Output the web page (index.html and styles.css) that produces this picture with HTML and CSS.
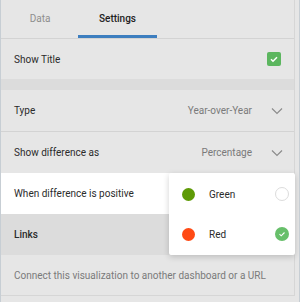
FILE: index.html
```html
<!DOCTYPE html>
<html lang="en">
<head>
  <meta charset="UTF-8"/>
  <title>Settings</title>
  <link rel="stylesheet" href="styles.css">
</head>
<body>
<div class="panel">
  <!-- Tabs -->
  <div class="tabs">
    <button class="tab">Data</button>
    <button class="tab active">Settings</button>
  </div>

  <!-- Title -->
  <div class="row">
    <span class="label">Show Title</span>
    <span class="checkbox">
      <svg width="10" height="10" viewBox="0 0 10 10"><path d="M2 5.2l2 2 4-4" fill="none" stroke="#fff" stroke-width="1.5"/></svg>
    </span>
  </div>

  <div class="spacer"></div>

  <!-- Options -->
  <div class="row bordered">
    <span class="label">Type</span>
    <span class="value">Year-over-Year</span>
    <svg class="chev" width="12" height="8" viewBox="0 0 12 8"><path d="M1 1.5l5 5 5-5" fill="none" stroke="#8c8c8c" stroke-width="1.2"/></svg>
  </div>
  <div class="row">
    <span class="label">Show difference as</span>
    <span class="value">Percentage</span>
    <svg class="chev" width="12" height="8" viewBox="0 0 12 8"><path d="M1 1.5l5 5 5-5" fill="none" stroke="#8c8c8c" stroke-width="1.2"/></svg>
  </div>
  <div class="row focus">
    <span class="label">When difference is positive</span>
  </div>

  <div class="row head">
    <span class="label">Links</span>
  </div>
  <div class="row note">
    <span>Connect this visualization to another dashboard or a URL</span>
  </div>

  <!-- Color menu -->
  <div class="menu">
    <div class="opt">
      <span class="dot green"></span>
      <span class="opt-name">Green</span>
      <span class="radio"></span>
    </div>
    <div class="opt">
      <span class="dot red"></span>
      <span class="opt-name">Red</span>
      <span class="radio on">
        <svg width="8" height="8" viewBox="0 0 8 8"><path d="M1.5 4.2l1.7 1.6 3.3-3.3" fill="none" stroke="#fff" stroke-width="1.1"/></svg>
      </span>
    </div>
  </div>
</div>
</body>
</html>
```

FILE: styles.css
```css
:root{
  --bg:#e6e6e6;
  --dim:#dcdcdc;
  --text:#2b2b2b;
  --muted:#7a7a7a;
  --line:#d3d3d3;
  --blue:#3d7ebf;
  --green:#5cb65f;
}
*{margin:0;padding:0;box-sizing:border-box;font-family:Roboto,Arial,sans-serif}
body{background:var(--bg);width:300px;height:302px;overflow:hidden;border-left:1px solid #c7ced4;border-right:1px solid #c7ced4}
.panel{position:relative;width:294px;height:296px;border-right:1px solid #d6d6d6;border-bottom:1px solid #d6d6d6}

.tabs{display:flex;height:39px;border-bottom:1px solid var(--line);padding-left:1px}
.tab{border:none;background:none;font-size:10px;color:#8e8e8e;width:76px;height:38px;padding-top:1px;border-bottom:3px solid transparent}
.tab.active{color:#222;font-weight:500;width:79px;border-bottom-color:var(--blue)}

.row{display:flex;align-items:center;height:41px;padding:0 11px 0 13px;font-size:10px;color:var(--text)}
.row:nth-child(2){height:40px;padding-right:13px}
.row.bordered{border-bottom:1px solid var(--line);height:42px}
.spacer{height:11px;background:var(--dim)}
.label{flex:1}
.value{color:var(--muted);margin-right:19px}
.checkbox{width:14px;height:14px;border-radius:2px;background:var(--green);display:flex;align-items:center;justify-content:center}
.row.focus{background:#fff}
.row.head{background:var(--dim);font-weight:500}
.row.note{color:var(--muted)}

/* dropdown laid over the rows */
.menu{position:absolute;left:168px;top:173px;width:126px;height:82px;background:#fff;border-radius:2px;box-shadow:0 2px 6px rgba(0,0,0,.18);padding:1px 6px 0 13px}
.opt{display:flex;align-items:center;height:40px;font-size:10px;color:var(--text)}
.dot{width:13px;height:13px;border-radius:50%}
.dot.green{background:#5e9a06}
.dot.red{background:#ff4a14}
.opt-name{flex:1;margin-left:14px}
.radio{width:14px;height:14px;border-radius:50%;border:1px solid #dcdcdc;display:flex;align-items:center;justify-content:center}
.radio.on{border:none;background:#67bf6a}
```
